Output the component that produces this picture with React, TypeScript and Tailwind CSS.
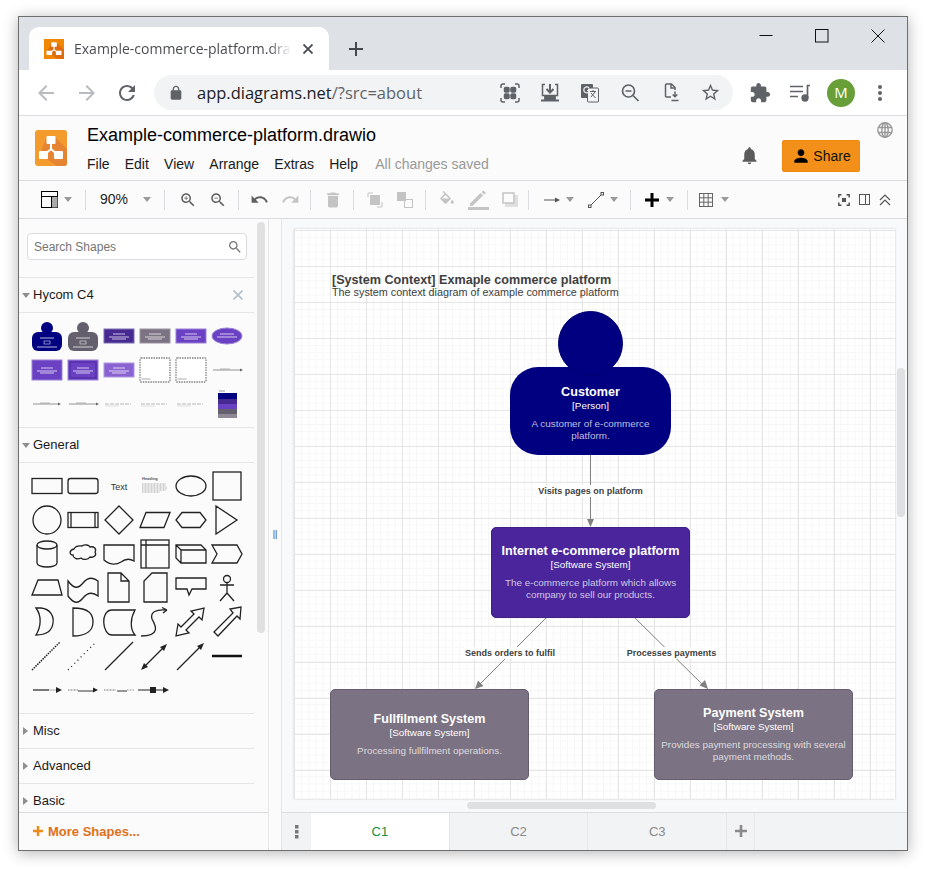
import type { ReactNode } from 'react';

const ARIAL = 'font-["Liberation_Sans",Arial,sans-serif]';

const SEARCH =
  'M15.5 14h-.79l-.28-.27C15.41 12.59 16 11.11 16 9.5 16 5.91 13.09 3 9.5 3S3 5.91 3 9.5 5.91 16 9.5 16c1.61 0 3.09-.59 4.23-1.57l.27.28v.79l5 4.99L20.49 19l-4.99-5zm-6 0C7.01 14 5 11.99 5 9.5S7.01 5 9.5 5 14 7.01 14 9.5 11.99 14 9.5 14z';

const P = {
  back: 'M20 11H7.83l5.59-5.59L12 4l-8 8 8 8 1.41-1.41L7.83 13H20v-2z',
  forward: 'M12 4l-1.41 1.41L16.17 11H4v2h12.17l-5.58 5.59L12 20l8-8z',
  reload:
    'M17.65 6.35C16.2 4.9 14.21 4 12 4c-4.42 0-7.99 3.58-7.99 8s3.57 8 7.99 8c3.73 0 6.84-2.55 7.73-6h-2.08c-.82 2.33-3.04 4-5.65 4-3.31 0-6-2.69-6-6s2.69-6 6-6c1.66 0 3.14.69 4.22 1.78L13 11h7V4l-2.35 2.35z',
  lock: 'M18 8h-1V6c0-2.76-2.24-5-5-5S7 3.24 7 6v2H6c-1.1 0-2 .9-2 2v10c0 1.1.9 2 2 2h12c1.1 0 2-.9 2-2V10c0-1.1-.9-2-2-2zM9 6c0-1.66 1.34-3 3-3s3 1.34 3 3v2H9V6z',
  star: 'M22 9.24l-7.19-.62L12 2 9.19 8.63 2 9.24l5.46 4.73L5.82 21 12 17.27 18.18 21l-1.63-7.03L22 9.24zM12 15.4l-3.76 2.27 1-4.28-3.32-2.88 4.38-.38L12 6.1l1.71 4.04 4.38.38-3.32 2.88 1 4.28L12 15.4z',
  puzzle:
    'M20.5 11H19V7c0-1.1-.9-2-2-2h-4V3.5C13 2.12 11.88 1 10.5 1S8 2.12 8 3.5V5H4c-1.1 0-1.99.9-1.99 2v3.8H3.5c1.49 0 2.7 1.21 2.7 2.7s-1.21 2.7-2.7 2.7H2V20c0 1.1.9 2 2 2h3.8v-1.5c0-1.49 1.21-2.7 2.7-2.7 1.49 0 2.7 1.21 2.7 2.7V22H17c1.1 0 2-.9 2-2v-4h1.5c1.38 0 2.5-1.12 2.5-2.5S21.88 11 20.5 11z',
  search: SEARCH,
  zoomIn: SEARCH + 'M12 10h-2v2H9v-2H7V9h2V7h1v2h2v1z',
  zoomOut: SEARCH + 'M7 9h5v1H7z',
  undo: 'M12.5 8c-2.65 0-5.05.99-6.9 2.6L2 7v9h9l-3.62-3.62c1.39-1.16 3.16-1.88 5.12-1.88 3.54 0 6.55 2.31 7.6 5.5l2.37-.78C21.08 11.03 17.15 8 12.5 8z',
  redo: 'M18.4 10.6C16.55 8.99 14.15 8 11.5 8c-4.65 0-8.58 3.03-9.96 7.22L3.9 16c1.05-3.19 4.05-5.5 7.6-5.5 1.95 0 3.73.72 5.12 1.88L13 16h9V7l-3.6 3.6z',
  trash: 'M6 19c0 1.1.9 2 2 2h8c1.1 0 2-.9 2-2V7H6v12zM19 4h-3.5l-1-1h-5l-1 1H5v2h14V4z',
  fill: 'M16.56 8.94L7.62 0 6.21 1.41l2.38 2.38-5.15 5.15c-.59.59-.59 1.54 0 2.12l5.5 5.5c.29.29.68.44 1.06.44s.77-.15 1.06-.44l5.5-5.5c.59-.58.59-1.53 0-2.12zM5.21 10L10 5.21 14.79 10H5.21zM19 11.5s-2 2.17-2 3.5c0 1.1.9 2 2 2s2-.9 2-2c0-1.33-2-3.5-2-3.5z',
  person: 'M12 12c2.21 0 4-1.79 4-4s-1.79-4-4-4-4 1.79-4 4 1.79 4 4 4zm0 2c-2.67 0-8 1.34-8 4v2h16v-2c0-2.66-5.33-4-8-4z',
  bell: 'M12 22c1.1 0 2-.9 2-2h-4c0 1.1.89 2 2 2zm6-6v-5c0-3.07-1.64-5.64-4.5-6.32V4c0-.83-.67-1.5-1.5-1.5s-1.5.67-1.5 1.5v.68C7.63 5.36 6 7.92 6 11v5l-2 2v1h16v-1l-2-2z',
};

function Mi({ d, size = 24, className = '' }: { d: string; size?: number; className?: string }) {
  return (
    <svg width={size} height={size} viewBox="0 0 24 24" className={`shrink-0 fill-current ${className}`}>
      <path d={d} />
    </svg>
  );
}

function LogoMark({ base, shade }: { base: string; shade: string }) {
  return (
    <svg width="100%" height="100%" viewBox="0 0 32 36" preserveAspectRatio="none">
      <rect width="32" height="36" fill={base} />
      <path d="M11 8h10l11 11v17H22L5 24z" fill={shade} />
      <path d="M16 13v6M16 19l-8 7M16 19l8 7" stroke="#fff" strokeWidth="2" fill="none" />
      <rect x="11.5" y="6" width="9" height="8" rx="1" fill="#fff" />
      <rect x="4" y="21" width="9" height="8" rx="1" fill="#fff" />
      <rect x="19" y="21" width="9" height="8" rx="1" fill="#fff" />
    </svg>
  );
}

function Caret({ className = 'ml-[5px]' }: { className?: string }) {
  return <span className={`inline-block h-0 w-0 border-x-[4.5px] border-t-[5px] border-x-transparent border-t-[#9a9a9a] ${className}`} />;
}

function Sep() {
  return <span className="h-[20px] w-px shrink-0 bg-[#dadce0]" />;
}

function OmniIcon({ children }: { children: ReactNode }) {
  return <span className="flex w-[40px] items-center justify-center text-[#5f6368]">{children}</span>;
}

function Browser() {
  return (
    <>
      <div className="flex h-[53px] items-end bg-[#dee1e6] pl-[10px]">
        <div className="flex h-[43px] w-[300px] items-center rounded-t-[10px] bg-white pl-[15px] pr-[16px]">
          <div className="h-[20px] w-[20px] shrink-0">
            <LogoMark base="#f08705" shade="#df6c0c" />
          </div>
          <span className="ml-[10px] w-[218px] overflow-hidden whitespace-nowrap font-['Open_Sans',sans-serif] text-[14px] text-[#4a4d51] [mask-image:linear-gradient(90deg,#000_90%,transparent)]">
            Example-commerce-platform.drawio
          </span>
          <svg width="10" height="10" viewBox="0 0 10 10" className="ml-[12px] shrink-0 stroke-[#45484c]" strokeWidth="1.8">
            <path d="M0.5 0.5l9 9M9.5 0.5l-9 9" />
          </svg>
        </div>
        <svg width="16" height="16" viewBox="0 0 16 16" className="mb-[13px] ml-[19px] stroke-[#45484c]" strokeWidth="2">
          <path d="M8 1v14M1 8h14" />
        </svg>
        <div className="ml-auto mb-[27px] mr-[22px] flex items-center gap-[42px]">
          <svg width="14" height="14" viewBox="0 0 14 14" fill="none" stroke="#111">
            <path d="M0.5 6.5h13" />
          </svg>
          <svg width="14" height="14" viewBox="0 0 14 14" fill="none" stroke="#111">
            <rect x="0.5" y="0.5" width="12.5" height="12.5" />
          </svg>
          <svg width="14" height="14" viewBox="0 0 14 14" fill="none" stroke="#111">
            <path d="M0.5 0.5l13 13M13.5 0.5l-13 13" />
          </svg>
        </div>
      </div>

      <div className="flex h-[46px] items-center border-b border-[#dadce0] bg-white">
        <Mi d={P.back} size={24} className="ml-[15px] text-[#b8bbbf]" />
        <Mi d={P.forward} size={24} className="ml-[17px] text-[#b8bbbf]" />
        <Mi d={P.reload} size={24} className="ml-[16px] text-[#5f6368]" />
        <div className="ml-[15px] flex h-[35px] w-[579px] items-center rounded-full bg-[#f1f3f4]">
          <Mi d={P.lock} size={16} className="ml-[14px] text-[#5f6368]" />
          <span className="ml-[13px] pt-[1px] font-['Open_Sans',sans-serif] text-[16.5px] text-[#202124]">
            app.diagrams.net<span className="text-[#5f6368]">/?src=about</span>
          </span>
          <div className="ml-auto mr-[3px] flex items-center">
            <OmniIcon>
              <svg width="20" height="20" viewBox="0 0 20 20" fill="none" stroke="currentColor" strokeWidth="1.5">
                <path d="M1 5V3a2 2 0 0 1 2-2h2M15 1h2a2 2 0 0 1 2 2v2M19 15v2a2 2 0 0 1-2 2h-2M5 19H3a2 2 0 0 1-2-2v-2" />
                <rect x="4.5" y="4.5" width="4.5" height="4.5" rx="1" fill="currentColor" />
                <rect x="11" y="4.5" width="4.5" height="4.5" rx="1" fill="currentColor" />
                <rect x="4.5" y="11" width="4.5" height="4.5" rx="1" fill="currentColor" />
                <rect x="11" y="11" width="4.5" height="4.5" rx="1" fill="currentColor" />
              </svg>
            </OmniIcon>
            <OmniIcon>
              <svg width="20" height="20" viewBox="0 0 20 20" fill="none" stroke="currentColor" strokeWidth="1.5">
                <path d="M5 1.5H2.5v11h15v-11H15" />
                <path d="M10 1v8M6.5 6l3.5 3.5L13.5 6" strokeWidth="2" />
                <path d="M5 13.5h10v2H5zM1 17.5h18" strokeWidth="1.8" />
              </svg>
            </OmniIcon>
            <OmniIcon>
              <svg width="20" height="20" viewBox="0 0 20 20">
                <rect x="1" y="1" width="12" height="14" rx="1" fill="currentColor" />
                <rect x="7.5" y="5" width="11" height="14" rx="1" fill="#f1f3f4" stroke="currentColor" />
                <path d="M10 8.5h6M13 7v1.5M11 14l4-5M11 10l4.5 5" stroke="currentColor" fill="none" />
                <path d="M9 4.8a3 3 0 1 0 .7 2.7H7" stroke="#f1f3f4" fill="none" strokeWidth="1.2" />
              </svg>
            </OmniIcon>
            <OmniIcon>
              <svg width="20" height="20" viewBox="0 0 20 20" fill="none" stroke="currentColor" strokeWidth="1.7">
                <circle cx="8.5" cy="8" r="6" />
                <path d="M13 12.5l5.5 5.5M5.5 8h6" />
              </svg>
            </OmniIcon>
            <OmniIcon>
              <svg width="20" height="20" viewBox="0 0 20 20" fill="none" stroke="currentColor" strokeWidth="1.5" className="ml-[4px]">
                <path d="M9 14H4.5a1 1 0 0 1-1-1V2a1 1 0 0 1 1-1h5L13 4.5V7" />
                <path d="M9 1v4h4" />
                <path d="M13 8.5v5M10.7 11.5l2.3 2.3 2.3-2.3M9.5 17.5h7" />
              </svg>
            </OmniIcon>
            <OmniIcon>
              <Mi d={P.star} size={21} />
            </OmniIcon>
          </div>
        </div>
        <Mi d={P.puzzle} size={22} className="ml-[16px] text-[#5f6368]" />
        <svg width="22" height="18" viewBox="0 0 22 18" className="ml-[18px] text-[#5f6368]" fill="none" stroke="currentColor" strokeWidth="1.7">
          <path d="M1 2.5h13M1 7.5h13M1 12.5h8" />
          <path d="M18.5 14V1.5H21" />
          <circle cx="16" cy="14" r="2.8" fill="currentColor" />
        </svg>
        <span className="ml-[16px] flex h-[28px] w-[28px] items-center justify-center rounded-full bg-[#689f38] font-['Open_Sans',sans-serif] text-[15px] text-white">
          M
        </span>
        <svg width="4" height="16" viewBox="0 0 4 16" className="ml-[23px] fill-[#5f6368]">
          <circle cx="2" cy="2" r="2" />
          <circle cx="2" cy="8" r="2" />
          <circle cx="2" cy="14" r="2" />
        </svg>
      </div>
    </>
  );
}

function AppHeader() {
  return (
    <div className={`flex h-[65px] border-b border-[#dadce0] bg-[#fbfbfb] ${ARIAL}`}>
      <div className="ml-[16px] mt-[14px] h-[36px] w-[32px] overflow-hidden rounded-[3px]">
        <LogoMark base="#f49b2d" shade="#e58433" />
      </div>
      <div className="ml-[20px] flex flex-col">
        <div className="mt-[8px] whitespace-nowrap text-[18px] leading-[22px] text-black">Example-commerce-platform.drawio</div>
        <div className="mt-[9px] flex gap-[15.2px] text-[14px] leading-[18px] text-[#1a1a1a]">
          <span>File</span>
          <span>Edit</span>
          <span>View</span>
          <span>Arrange</span>
          <span>Extras</span>
          <span>Help</span>
          <span className="ml-[2px] text-[#999]">All changes saved</span>
        </div>
      </div>
      <Mi d={P.bell} size={21} className="ml-auto mt-[29px] text-[#5a5a5a]" />
      <div className="ml-[22px] mt-[24px] flex h-[32px] w-[78px] items-center justify-center rounded-[2px] border border-[#ee8b0f] bg-[#f39019] text-[14px] text-[#111]">
        <Mi d={P.person} size={20} className="mr-[2px] text-black" />
        Share
      </div>
      <svg width="16" height="16" viewBox="0 0 16 16" fill="none" stroke="#999" strokeWidth="1.4" className="ml-[17px] mr-[14px] mt-[6px] shrink-0">
        <circle cx="8" cy="8" r="7.2" />
        <ellipse cx="8" cy="8" rx="3.2" ry="7.2" />
        <path d="M8 .8v14.4M1 5.5h14M1 10.5h14" />
      </svg>
    </div>
  );
}

function Toolbar() {
  const on = 'text-[#5f5f5f]';
  const off = 'text-[#c4c4c4]';
  return (
    <div className={`flex h-[38px] items-center border-b border-[#dadce0] bg-[#fbfbfb] ${ARIAL}`}>
      <svg width="18" height="17" viewBox="0 0 18 17" className="ml-[22px] shrink-0">
        <rect x="0.5" y="0.5" width="16" height="16" fill="none" stroke="#000" />
        <rect x="11" y="5.5" width="5.5" height="11" fill="#aaa" />
        <path d="M0.5 5.5h16M10.5 5.5v11" stroke="#000" />
      </svg>
      <Caret className="ml-[5px] mr-[13px]" />
      <Sep />
      <span className="ml-[14px] w-[32px] text-[14px] text-[#222]">90%</span>
      <Caret className="ml-[11px] mr-[13px]" />
      <Sep />
      <Mi d={P.zoomIn} size={18} className={`ml-[14px] ${on}`} />
      <Mi d={P.zoomOut} size={18} className={`ml-[12px] mr-[11px] ${on}`} />
      <Sep />
      <Mi d={P.undo} size={19} className={`ml-[11px] ${on}`} />
      <Mi d={P.redo} size={19} className={`ml-[12px] mr-[10px] ${off}`} />
      <Sep />
      <Mi d={P.trash} size={20} className={`ml-[12px] mr-[10px] ${off}`} />
      <Sep />
      <svg width="16" height="16" viewBox="0 0 16 16" className={`ml-[13px] ${off}`} fill="none" stroke="currentColor">
        <path d="M1 5V1h5M10 15h5v-5" />
        <rect x="3.5" y="3.5" width="9" height="9" fill="currentColor" />
      </svg>
      <svg width="16" height="16" viewBox="0 0 16 16" className={`ml-[14px] mr-[12px] ${off}`} fill="none" stroke="currentColor">
        <rect x="0.5" y="0.5" width="8" height="8" fill="currentColor" />
        <rect x="7.5" y="7.5" width="8" height="8" />
      </svg>
      <Sep />
      <Mi d={P.fill} size={18} className={`ml-[12px] ${off}`} />
      <svg width="21" height="20" viewBox="0 0 21 20" className={`ml-[12px] ${off}`} fill="currentColor">
        <path d="M2 13.5V16h2.5L15 5.5 12.5 3zM13.500 2l2.500 2.500L18 3l-2.500-2.500z" />
        <rect y="17" width="21" height="3" />
      </svg>
      <svg width="16" height="15" viewBox="0 0 16 15" className={`ml-[13px] mr-[10px] ${off}`}>
        <path d="M3 3h13v12H3z" fill="#e0e0e0" />
        <rect x="1" y="1" width="11" height="10" fill="#fbfbfb" stroke="#c4c4c4" strokeWidth="1.5" />
      </svg>
      <Sep />
      <svg width="16" height="8" viewBox="0 0 16 8" className="ml-[15px]">
        <path d="M0 4h12" stroke="#555" />
        <path d="M11 1.5l5 2.5-5 2.500z" fill="#555" />
      </svg>
      <Caret className="ml-[6px]" />
      <svg width="16" height="16" viewBox="0 0 16 16" className="ml-[14px]" fill="none" stroke="#555">
        <path d="M2 14L14 2" />
        <rect x="0.5" y="13" width="2.5" height="2.5" fill="#fbfbfb" />
        <rect x="13" y="0.5" width="2.5" height="2.5" fill="#fbfbfb" />
      </svg>
      <Caret className="ml-[6px] mr-[12px]" />
      <Sep />
      <svg width="14" height="14" viewBox="0 0 14 14" className="ml-[14px]">
        <path d="M5.5 0h3v5.500H14v3H8.500V14h-3V8.500H0v-3h5.500z" fill="#000" />
      </svg>
      <Caret className="ml-[7px] mr-[13px]" />
      <Sep />
      <svg width="14" height="14" viewBox="0 0 14 14" className="ml-[11px]" fill="none" stroke="#666">
        <rect x="0.5" y="0.5" width="13" height="13" />
        <path d="M4.8 .5v13M9.2 .5v13M.5 4.8h13M.5 9.2h13" />
      </svg>
      <Caret className="ml-[8px]" />
      <div className="ml-auto mr-[16px] flex items-center gap-[9px]">
        <svg width="12" height="12" viewBox="0 0 12 12" fill="none" stroke="#555" strokeWidth="1.5">
          <path d="M.8 3.5V.8h2.700M8.500.8h2.700v2.700M11.200 8.500v2.700H8.500M3.500 11.200H.8V8.500" />
          <rect x="4" y="4" width="4" height="4" fill="#555" stroke="none" />
        </svg>
        <svg width="11" height="11" viewBox="0 0 11 11" fill="none" stroke="#555">
          <rect x="0.5" y="0.5" width="10" height="10" />
          <path d="M6.5 .5v10" />
        </svg>
        <svg width="12" height="12" viewBox="0 0 12 12" fill="none" stroke="#555" strokeWidth="1.2">
          <path d="M1 6l5-5 5 5M1 11l5-5 5 5" />
        </svg>
      </div>
    </div>
  );
}

function Bar({ x = 0, y, w, color = '#fff' }: { x?: number; y: number; w: number; color?: string }) {
  return <path d={`M${18 + x - w / 2} ${y}h${w}`} stroke={color} strokeWidth="0.8" opacity="0.9" />;
}

function thumbBox(fill: string, stroke: string, y: number, h: number) {
  return (
    <>
      <rect x="3" y={y} width="30" height={h} fill={fill} stroke={stroke} />
      <Bar y={y + h / 2 - 2} w={12} />
      <Bar y={y + h / 2 + 1} w={20} />
      <Bar y={y + h / 2 + 3} w={14} />
    </>
  );
}

function thumbPerson(fill: string) {
  return (
    <>
      <circle cx="18" cy="9" r="6" fill={fill} />
      <rect x="3" y="13" width="30" height="19" rx="6" fill={fill} />
      <Bar y={19} w={14} />
      <rect x="15" y="22" width="6" height="3" fill="none" stroke="#fff" strokeWidth="0.5" />
      <Bar y={28} w={20} />
    </>
  );
}

function thumbDashed() {
  return (
    <>
      <rect x="3" y="5" width="30" height="24" rx="1" fill="#fff" stroke="#808080" strokeWidth="1.3" strokeDasharray="1.5 1" />
      <Bar x={-9} y={26} w={9} color="#888" />
    </>
  );
}

function thumbArrow(y: number, w = 28) {
  return (
    <>
      <path d={`M4 ${y}h${w}`} stroke="#888" strokeWidth="0.9" />
      <path d={`M${w + 3} ${y - 1.5}l3 1.5-3 1.5z`} fill="#666" />
      <Bar x={-2} y={y - 1} w={10} color="#999" />
    </>
  );
}

function thumbLink() {
  return (
    <>
      <path d="M4 17h26" stroke="#aaa" strokeWidth="0.8" strokeDasharray="4 1" />
      <path d="M4 19h14" stroke="#ccc" strokeWidth="0.6" />
    </>
  );
}

const hycom: ReactNode[] = [
  thumbPerson('#000080'),
  thumbPerson('#645f6c'),
  thumbBox('#462a92', '#7d6fb0', 10, 14),
  thumbBox('#7b7283', '#9a93a0', 10, 14),
  thumbBox('#6b41c4', '#9a82d8', 10, 14),
  <>
    <ellipse cx="18" cy="17" rx="15" ry="8" fill="#6b41c4" stroke="#9a82d8" />
    <Bar y={15} w={14} />
    <Bar y={18} w={20} />
  </>,
  thumbBox('#6b41c4', '#9a82d8', 7, 20),
  <>
    {thumbBox('#6b41c4', '#9a82d8', 7, 20)}
    <rect x="5" y="9" width="26" height="16" fill="none" stroke="#4c2a9c" />
  </>,
  thumbBox('#8a63d2', '#b09ae0', 10, 14),
  thumbDashed(),
  thumbDashed(),
  thumbArrow(17),
  thumbArrow(17, 26),
  thumbArrow(17),
  thumbLink(),
  thumbLink(),
  thumbLink(),
  <>
    <rect x="9" y="6" width="19" height="6" fill="#000080" />
    <rect x="9" y="12" width="19" height="5" fill="#462a92" />
    <rect x="9" y="17" width="19" height="5" fill="#6b41c4" />
    <rect x="9" y="22" width="19" height="5" fill="#645f6c" />
    <rect x="9" y="27" width="19" height="4" fill="#8f8896" />
    <Bar x={-5} y={4} w={6} color="#777" />
  </>,
];

const line = { fill: 'none', stroke: '#222', strokeWidth: 1.3 };

const general: ReactNode[] = [
  <rect x="3" y="9.5" width="30" height="15" {...line} />,
  <rect x="3" y="9.5" width="30" height="15" rx="2.5" {...line} />,
  <text x="18" y="20.5" textAnchor="middle" fontSize="9" fontFamily="Liberation Sans" fill="#333">
    Text
  </text>,
  <>
    <text x="5" y="11" fontSize="4" fontWeight="bold" fontFamily="Liberation Sans" fill="#555">
      Heading
    </text>
    <path d="M5 15h24M5 17h24M5 19h25M5 21h24M5 23h18" stroke="#888" strokeWidth="0.7" strokeDasharray="1 .5" />
  </>,
  <ellipse cx="18" cy="17" rx="15" ry="10" {...line} />,
  <rect x="4" y="3" width="28" height="28" {...line} />,

  <circle cx="18" cy="17" r="14" {...line} />,
  <>
    <rect x="3" y="9.5" width="30" height="15" {...line} />
    <path d="M6 9.5v15M30 9.5v15" {...line} />
  </>,
  <path d="M18 3l14 14-14 14L4 17z" {...line} />,
  <path d="M9 9.5h24l-6 15H3z" {...line} />,
  <path d="M9 9.5h18l6 7.5-6 7.5H9L3 17z" {...line} />,
  <path d="M7 3l21 14-21 14z" {...line} />,

  <>
    <path d="M8 8a10 4 0 0 1 20 0v18a10 4 0 0 1-20 0z" {...line} />
    <path d="M8 8a10 4 0 0 0 20 0" {...line} />
  </>,
  <path d="M9 12c2-4 6-3 8-3 3-2 7-1 8 1 4-1 7 2 5 5 2 3-1 6-5 5-2 3-7 3-9 1-4 2-8 0-8-3-4 0-4-5 1-6z" {...line} />,
  <path d="M3 8h30v16c-5-3-9-2-13 1-5 3-11 3-17-2z" {...line} />,
  <>
    <rect x="4" y="3" width="28" height="28" {...line} />
    <path d="M9 3v28M4 8h28" {...line} />
  </>,
  <path d="M3 8h25l5 5v13H8L3 21zM8 13h25M8 13v13M3 8l5 5" {...line} />,
  <path d="M3 8h25l5 9-5 9H3l5-9z" {...line} />,

  <path d="M9 9h20l4 15H3z" {...line} />,
  <path d="M3 10c6 8 10 8 15 2 5-6 10-6 15-2v15c-5-4-10-4-15 2-5 6-9 6-15-2z" {...line} />,
  <path d="M7 2h13l8 8v21H7zM20 2v8h8" {...line} />,
  <path d="M15 2h15v29H7V10z" {...line} />,
  <path d="M3 7h30v11H19l-3 6-2-6H3z" {...line} />,
  <>
    <circle cx="18" cy="8" r="3.5" {...line} />
    <path d="M18 11.5v11M11 14h14M18 22l-7 8M18 22l7 8" {...line} />
  </>,

  <path d="M7 3h5c10 1 13 9 12 15-1 8-7 12-17 12 5-8 6-19 0-27z" {...line} />,
  <path d="M8 3c16 0 20 6 20 14s-6 14-20 14z" {...line} />,
  <path d="M11 3h23c-5 9-5 19 0 25H11C1 28-1 3 11 3z" transform="translate(0 2)" {...line} />,
  <path d="M4 31c22 0 13-13 11-17-2-7 4-10 15-9m0 0l-5-2.5M30 5l-4 3" {...line} />,
  <path d="M3 31l2-12 3 3 13-13-3-3 13-3-2 12-3-3-13 13 3 3z" {...line} />,
  <path d="M5 27l19-19-3-4 11-2-1 12-3-3L9 31z" {...line} />,

  <path d="M3 31L31 3" fill="none" stroke="#222" strokeWidth="1.5" strokeDasharray="1.5 1" />,
  <path d="M3 31L31 3" fill="none" stroke="#222" strokeWidth="1.3" strokeDasharray="1 3.5" />,
  <path d="M4 31L32 3" {...line} />,
  <>
    <path d="M6 29L28 7" {...line} />
    <path d="M30 5l-7 3 4 4zM4 31l7-3-4-4z" fill="#222" />
  </>,
  <>
    <path d="M4 31L28 7" {...line} />
    <path d="M31 4l-7 3 4 4z" fill="#222" />
  </>,
  <path d="M3 17h30" stroke="#111" strokeWidth="2.5" />,

  <>
    <path d="M4 17h16" stroke="#222" strokeWidth="1.2" />
    <path d="M20 17h9" stroke="#bbb" strokeWidth="1.2" />
    <path d="M27 14l6 3-6 3z" fill="#222" />
  </>,
  <>
    <path d="M3 17h10" stroke="#777" strokeDasharray="1 .5" />
    <path d="M13 18h16" stroke="#333" />
    <path d="M28 14.5l5 2.5-5 2.5z" fill="#222" />
  </>,
  <>
    <path d="M3 17h12" stroke="#777" strokeDasharray="1 .5" />
    <path d="M16 18h10" stroke="#333" />
    <path d="M26 17h7" stroke="#999" strokeDasharray="1 .5" />
  </>,
  <>
    <path d="M1 17h25" stroke="#222" />
    <rect x="13" y="14" width="6" height="6" fill="#222" />
    <path d="M26 14l6 3-6 3z" fill="#222" />
  </>,
];

function Palette({ items }: { items: ReactNode[] }) {
  return (
    <div className="grid grid-cols-[repeat(6,36px)] auto-rows-[34px] border-t border-[#e5e5e5] py-[6px] pl-[10px]">
      {items.map((item, index) => (
        <svg key={index} width="36" height="34" viewBox="0 0 36 34">
          {item}
        </svg>
      ))}
    </div>
  );
}

function SectionHead({ title, open, close }: { title: string; open?: boolean; close?: boolean }) {
  return (
    <div className="flex h-[35px] items-center border-t border-[#e5e5e5] text-[13px] text-[#1a1a1a]">
      {open ? (
        <span className="ml-[3px] h-0 w-0 border-x-[4px] border-t-[5px] border-x-transparent border-t-[#8f8f8f]" />
      ) : (
        <span className="ml-[4px] h-0 w-0 border-y-[4px] border-l-[5px] border-y-transparent border-l-[#8f8f8f]" />
      )}
      <span className={open ? 'ml-[3px]' : 'ml-[5px]'}>{title}</span>
      {close && (
        <svg width="10" height="10" viewBox="0 0 10 10" className="ml-auto mr-[11px] stroke-[#b5c0cc]" strokeWidth="1.7">
          <path d="M.5.5l9 9M9.5.5l-9 9" />
        </svg>
      )}
    </div>
  );
}

function Sidebar() {
  return (
    <div className={`flex w-[250px] shrink-0 flex-col border-r border-[#e5e5e5] bg-[#fbfbfb] ${ARIAL}`}>
      <div className="relative min-h-0 flex-1 overflow-hidden">
        <div className="absolute right-[3px] top-[3px] h-[411px] w-[8px] rounded-full bg-[#e0e0e0]" />
        <div className="w-[235px]">
          <div className="flex h-[58px] items-start pl-[8px] pt-[14px]">
            <div className="flex h-[27px] w-[220px] items-center rounded-[4px] border border-[#dadce0] bg-white pl-[6px] text-[12px] text-[#757575]">
              Search Shapes
              <Mi d={P.search} size={16} className="ml-auto mr-[3px] text-[#777]" />
            </div>
          </div>
          <SectionHead title="Hycom C4" open close />
          <Palette items={hycom} />
          <SectionHead title="General" open />
          <Palette items={general} />
          <SectionHead title="Misc" />
          <SectionHead title="Advanced" />
          <SectionHead title="Basic" />
        </div>
      </div>
      <div className="flex h-[38px] shrink-0 items-center border-t border-[#dadce0] pl-[14px] text-[13px] font-bold text-[#e0701a]">
        <svg width="10" height="10" viewBox="0 0 10 10" className="mb-[2px] mr-[5px]">
          <path d="M3.8 0h2.4v3.8H10v2.4H6.2V10H3.8V6.2H0V3.8h3.800z" fill="#ee8b1c" />
        </svg>
        More Shapes...
      </div>
    </div>
  );
}

function Label({ text, className }: { text: string; className: string }) {
  return (
    <span className={`absolute -translate-x-1/2 -translate-y-1/2 whitespace-nowrap bg-white px-px text-[9px] font-bold leading-[12px] text-[#404040] ${className}`}>
      {text}
    </span>
  );
}

function Node({ title, kind, desc, className }: { title: string; kind: string; desc: ReactNode; className: string }) {
  return (
    <div className={`absolute flex flex-col items-center justify-center text-center ${className}`}>
      <div className="text-[12.6px] font-bold leading-[15px] text-white">{title}</div>
      <div className="text-[9.9px] leading-[12px] text-white">{kind}</div>
      <div className="mt-[6px] text-[9.9px] leading-[12px] text-white/75">{desc}</div>
    </div>
  );
}

function Diagram() {
  return (
    <div className="relative h-[570px] w-[601px] bg-white bg-[linear-gradient(#e6e6e6_1px,transparent_1px),linear-gradient(90deg,#e6e6e6_1px,transparent_1px),linear-gradient(#f6f6f6_1px,transparent_1px),linear-gradient(90deg,#f6f6f6_1px,transparent_1px)] bg-[size:36px_36px,36px_36px,7.2px_7.2px,7.2px_7.2px] bg-[position:0_1px,0_1px,0_1px,0_1px] shadow-[0_0_2px_rgba(0,0,0,0.2)]">
      <div className="absolute left-[38px] top-[44px] text-[#404040]">
        <div className="text-[12.6px] font-bold leading-[14px]">[System Context] Exmaple commerce platform</div>
        <div className="text-[10.8px] leading-[11px]">The system context diagram of example commerce platform</div>
      </div>

      <svg width="601" height="570" viewBox="0 0 601 570" className="absolute inset-0">
        <g stroke="#808080" fill="none">
          <path d="M296.5 226V292M252 389L186 455M341 389L408 455" />
        </g>
        <g fill="#808080">
          <path d="M296.5 298l-3.5-8h7z" />
          <path d="M181 460l3-8.5 5.5 5.5z" />
          <path d="M414 460l-8.5-3.5 5.5-5.5z" />
        </g>
      </svg>

      <div className="absolute left-[216px] top-[138px] h-[88px] w-[161px] rounded-[28px] bg-[#000080]" />
      <div className="absolute left-[264px] top-[82px] h-[65px] w-[65px] rounded-full border border-[#000070] bg-[#000080]" />
      <Node
        title="Customer"
        kind="[Person]"
        desc={
          <>
            A customer of e-commerce
            <br />
            platform.
          </>
        }
        className="left-[216px] top-[140px] h-[88px] w-[161px]"
      />
      <Node
        title="Internet e-commerce platform"
        kind="[Software System]"
        desc={
          <>
            The e-commerce platform which allows
            <br />
            company to sell our products.
          </>
        }
        className="left-[197px] top-[298px] h-[91px] w-[199px] rounded-[5px] border border-[#3d2283] bg-[#4a259b]"
      />
      <Node
        title="Fullfilment System"
        kind="[Software System]"
        desc="Processing fullfilment operations."
        className="left-[36px] top-[460px] h-[91px] w-[199px] rounded-[5px] border border-[#655d6d] bg-[#7b7283]"
      />
      <Node
        title="Payment System"
        kind="[Software System]"
        desc={
          <>
            Provides payment processing with several
            <br />
            payment methods.
          </>
        }
        className="left-[360px] top-[460px] h-[91px] w-[199px] rounded-[5px] border border-[#655d6d] bg-[#7b7283]"
      />

      <Label text="Visits pages on platform" className="left-[296.5px] top-[262px]" />
      <Label text="Sends orders to fulfil" className="left-[216px] top-[424px]" />
      <Label text="Processes payments" className="left-[377.5px] top-[424px]" />
    </div>
  );
}

function PageTab({ label, active }: { label: string; active?: boolean }) {
  return (
    <div
      className={`flex w-[138.7px] items-center justify-center border-r border-[#e5e7ea] text-[13px] ${
        active ? 'bg-white text-[#158f3f]' : 'bg-[#f1f3f4] text-[#8a8a8a]'
      }`}
    >
      {label}
    </div>
  );
}

function Workspace() {
  return (
    <div className={`flex min-w-0 flex-1 flex-col bg-[#f8f9fa] ${ARIAL}`}>
      <div className="relative min-h-0 flex-1 overflow-hidden pl-[12px] pt-[10px]">
        <Diagram />
        <div className="absolute bottom-[3px] left-[185px] h-[7px] w-[189px] rounded-full bg-[#dfe0e2]" />
        <div className="absolute right-[2px] top-[149px] h-[149px] w-[8px] rounded-full bg-[#dfe0e2]" />
      </div>
      <div className="flex h-[38px] shrink-0 border-t border-[#dadce0] bg-[#f1f3f4]">
        <div className="flex w-[29px] items-center justify-center">
          <svg width="4" height="14" viewBox="0 0 4 14" className="fill-[#777]">
            <rect width="3.5" height="3.5" />
            <rect y="5" width="3.5" height="3.5" />
            <rect y="10" width="3.5" height="3.5" />
          </svg>
        </div>
        <PageTab label="C1" active />
        <PageTab label="C2" />
        <PageTab label="C3" />
        <div className="flex w-[28px] items-center justify-center border-r border-[#e5e7ea]">
          <svg width="12" height="12" viewBox="0 0 12 12" className="mb-[2px]">
            <path d="M4.7 0h2.6v4.7H12v2.6H7.3V12H4.7V7.3H0V4.7h4.7z" fill="#8a8a8a" />
          </svg>
        </div>
      </div>
    </div>
  );
}

export default function App() {
  return (
    <div className="h-[870px] w-[925px] overflow-hidden bg-white pl-[18px] pt-[16px]">
      <div className="flex h-[835px] w-[890px] flex-col overflow-hidden border border-[#6e6e6e] shadow-[0_2px_14px_rgba(0,0,0,0.3)]">
        <Browser />
        <AppHeader />
        <Toolbar />
        <div className="flex min-h-0 flex-1">
          <Sidebar />
          <div className={`flex w-[13px] shrink-0 items-center justify-center border-r border-[#e5e5e5] bg-[#fbfbfb] text-[9px] text-[#444] ${ARIAL}`}>
            ||
          </div>
          <Workspace />
        </div>
      </div>
    </div>
  );
}
